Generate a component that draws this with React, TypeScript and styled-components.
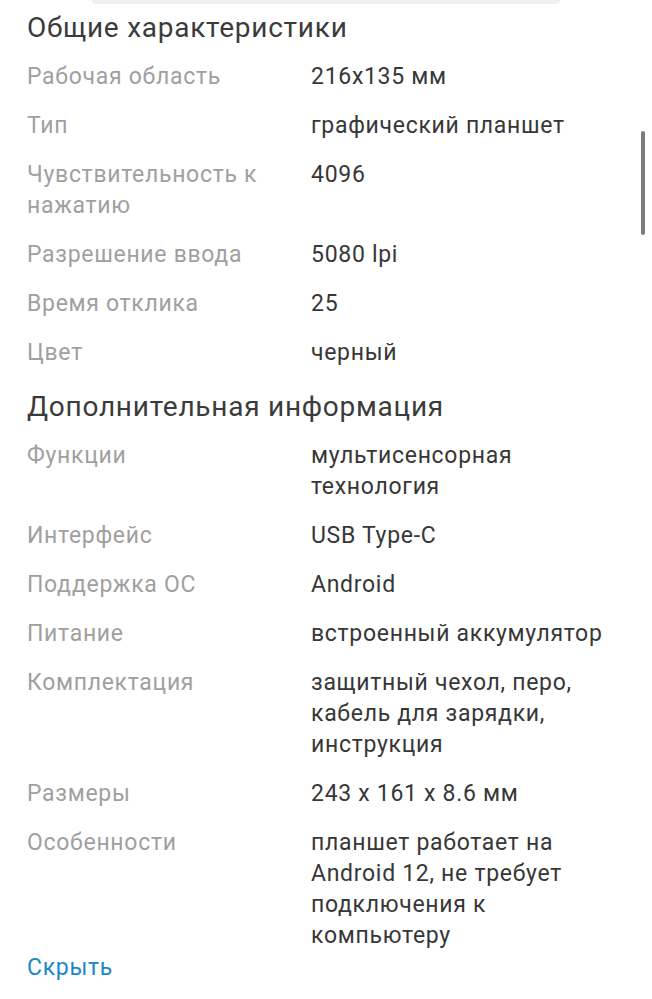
import React from "react";
import styled, { createGlobalStyle } from "styled-components";

const GlobalStyle = createGlobalStyle`
  html, body {
    margin: 0;
    padding: 0;
    background: #ffffff;
  }
  body {
    font-family: Roboto, "Noto Sans", "Liberation Sans", sans-serif;
    -webkit-font-smoothing: antialiased;
  }
`;

const Page = styled.div`
  position: relative;
  width: 652px;
  min-height: 999px;
  background: #ffffff;
  overflow: hidden;
`;

const TopCard = styled.div`
  height: 4px;
  margin: 0 92px;
  background: #efefef;
  border-radius: 0 0 14px 14px;
`;

const Content = styled.div`
  display: flex;
  flex-direction: column;
  gap: 21px;
  padding: 6px 27px 0 27px;
`;

const Section = styled.section`
  display: flex;
  flex-direction: column;
`;

const Heading = styled.h2`
  margin: 0 0 15px 0;
  font-size: 28px;
  line-height: 36px;
  font-weight: 400;
  letter-spacing: 0.75px;
  color: #3b3b3b;
`;

const Rows = styled.dl`
  margin: 0;
  display: flex;
  flex-direction: column;
  gap: 18px;
`;

const Row = styled.div`
  display: grid;
  grid-template-columns: 284px 1fr;
  font-size: 23px;
  line-height: 31px;
  letter-spacing: 0.7px;
`;

const Label = styled.dt`
  margin: 0;
  color: #a0a0a0;
  padding-right: 16px;
`;

const Value = styled.dd`
  margin: 0;
  color: #373737;
`;

const HideLink = styled.a`
  display: block;
  margin-top: 1px;
  font-size: 23px;
  line-height: 31px;
  letter-spacing: 0.7px;
  color: #1b87c8;
  text-decoration: none;
  cursor: pointer;
`;

const Scrollbar = styled.div`
  position: absolute;
  right: 7px;
  top: 131px;
  width: 4px;
  height: 104px;
  border-radius: 2px;
  background: #7b7b7b;
`;

type Item = [string, string];

const general: Item[] = [
  ["Рабочая область", "216x135 мм"],
  ["Тип", "графический планшет"],
  ["Чувствительность к нажатию", "4096"],
  ["Разрешение ввода", "5080 lpi"],
  ["Время отклика", "25"],
  ["Цвет", "черный"],
];

const extra: Item[] = [
  ["Функции", "мультисенсорная технология"],
  ["Интерфейс", "USB Type-C"],
  ["Поддержка ОС", "Android"],
  ["Питание", "встроенный аккумулятор"],
  ["Комплектация", "защитный чехол, перо, кабель для зарядки, инструкция"],
  ["Размеры", "243 x 161 x 8.6 мм"],
  ["Особенности", "планшет работает на Android 12, не требует подключения к компьютеру"],
];

const SpecSection = ({ title, items }: { title: string; items: Item[] }) => (
  <Section>
    <Heading>{title}</Heading>
    <Rows>
      {items.map(([k, v]) => (
        <Row key={k}>
          <Label>{k}</Label>
          <Value>{v}</Value>
        </Row>
      ))}
    </Rows>
  </Section>
);

export default function App() {
  return (
    <Page>
      <GlobalStyle />
      <TopCard />
      <Content>
        <SpecSection title="Общие характеристики" items={general} />
        <div>
          <SpecSection title="Дополнительная информация" items={extra} />
          <HideLink>Скрыть</HideLink>
        </div>
      </Content>
      <Scrollbar />
    </Page>
  );
}
